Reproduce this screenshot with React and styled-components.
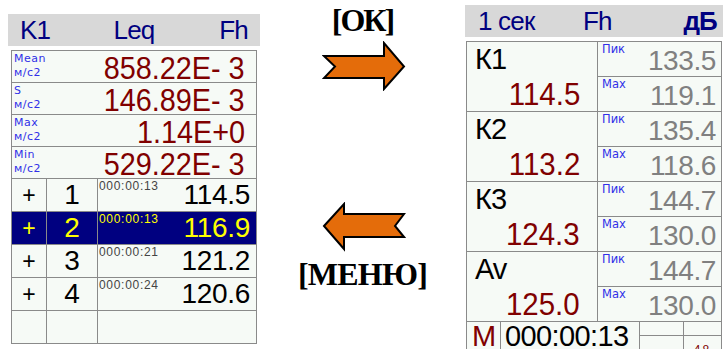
import React from "react";
import styled, { createGlobalStyle } from "styled-components";

const Global = createGlobalStyle`
  html, body {
    margin: 0;
    padding: 0;
    background: #ffffff;
    overflow: hidden;
  }
  body {
    font-family: "Liberation Sans", Arial, sans-serif;
  }
`;

const Page = styled.div`
  display: flex;
  align-items: flex-start;
  width: 726px;
  height: 349px;
  overflow: hidden;
`;

const Screen = styled.div`
  display: flex;
  flex-direction: column;
  width: ${(p) => p.$width}px;
  margin-top: ${(p) => p.$top}px;
  margin-left: ${(p) => p.$left || 0}px;
`;

const Header = styled.div`
  display: grid;
  grid-template-columns: ${(p) => p.$cols};
  align-items: center;
  height: 32px;
  padding: ${(p) => p.$pad};
  background: #d8d8d8;
  color: #000080;
  font-size: 26px;
  letter-spacing: -0.8px;
`;

const HeadText = styled.span`
  justify-self: ${(p) => p.$align || "start"};
  font-weight: ${(p) => (p.$bold ? "bold" : "normal")};
`;

// экранный шрифт прибора уже обычного, поэтому цифры чуть сжаты
const Narrow = styled.span`
  display: inline-block;
  transform: scaleX(${(p) => p.$scale || 1});
  transform-origin: right center;
  white-space: nowrap;
`;

// сетка левого экрана: линии между ячейками даёт фон через gap
const LeqTable = styled.div`
  display: grid;
  grid-template-columns: 34px 50px 1fr;
  grid-template-rows: repeat(4, 31px) repeat(5, 32px);
  gap: 1px;
  padding: 1px;
  margin: 4px 3px 0 3px;
  background: #8a8a8a;
`;

const StatRow = styled.div`
  grid-column: 1 / -1;
  display: flex;
  justify-content: space-between;
  align-items: flex-end;
  background: #f6faf6;
  padding: 0 11px 0 2px;
`;

const UnitLabel = styled.div`
  align-self: flex-start;
  display: flex;
  flex-direction: column;
  padding-top: 1px;
  font-family: "DejaVu Sans", sans-serif;
  font-size: 11px;
  line-height: 14px;
  color: #3030e8;
  letter-spacing: 0.5px;
`;

const StatValue = styled(Narrow)`
  font-size: 32px;
  line-height: 28px;
  color: #800000;
`;

const Cell = styled.div`
  display: flex;
  align-items: center;
  justify-content: center;
  background: ${(p) => (p.$active ? "#000080" : "#f6faf6")};
  color: ${(p) => (p.$active ? "#ffff00" : "#000000")};
  font-size: ${(p) => p.$size || 27}px;
`;

const TimeCell = styled.div`
  display: flex;
  justify-content: flex-end;
  align-items: flex-end;
  position: relative;
  padding: 0 6px 2px 0;
  background: ${(p) => (p.$active ? "#000080" : "#f6faf6")};
  color: ${(p) => (p.$active ? "#ffff00" : "#000000")};
`;

const Stamp = styled.span`
  position: absolute;
  left: 1px;
  top: 1px;
  font-size: 12px;
  line-height: 13px;
  letter-spacing: 0.7px;
  color: ${(p) => (p.$active ? "#ffff00" : "#444444")};
`;

const ListValue = styled.span`
  font-size: 28px;
  line-height: 28px;
  letter-spacing: -0.3px;
`;

const Middle = styled.div`
  display: flex;
  flex-direction: column;
  align-items: center;
  width: 205px;
`;

const Caption = styled.div`
  font-family: "Liberation Serif", "Times New Roman", serif;
  font-weight: bold;
  font-size: 32px;
  line-height: 34px;
  letter-spacing: ${(p) => p.$spacing}px;
  color: #000000;
  margin-top: ${(p) => p.$top}px;
`;

const ArrowSvg = styled.svg`
  display: block;
  margin-top: ${(p) => p.$top}px;
  margin-left: 3px;
`;

const BandTable = styled.div`
  display: grid;
  grid-template-columns: 130px 1fr;
  grid-template-rows: repeat(8, 34px);
  gap: 1px;
  padding: 1px 1px 0 1px;
  margin: 4px 1px 0 1px;
  background: #8a8a8a;
`;

const BandCell = styled.div`
  grid-row: span 2;
  display: flex;
  flex-direction: column;
  justify-content: space-between;
  background: #f6faf6;
  padding: 2px 17px 0 8px;
`;

const BandName = styled.span`
  font-size: 29px;
  line-height: 31px;
  letter-spacing: -1px;
  color: #000000;
`;

const BandLevel = styled(Narrow)`
  align-self: flex-end;
  font-size: 31px;
  line-height: 33px;
  color: #800000;
`;

const SubCell = styled.div`
  display: flex;
  justify-content: space-between;
  align-items: flex-end;
  background: #f6faf6;
  padding: 0 5px 0 4px;
`;

const SubLabel = styled.span`
  align-self: flex-start;
  font-family: "DejaVu Sans", sans-serif;
  font-size: 11.5px;
  line-height: 15px;
  color: #3030e8;
`;

const SubValue = styled.span`
  font-size: 28px;
  line-height: 30px;
  letter-spacing: -0.4px;
  color: #808080;
`;

const StatusBar = styled.div`
  display: grid;
  grid-template-columns: 33px 138px 43px 1fr;
  grid-template-rows: 13px 30px;
  gap: 1px;
  padding: 1px;
  margin: 0 1px;
  background: #8a8a8a;
`;

const StatusCell = styled.div`
  grid-row: ${(p) => (p.$tall ? "span 2" : "auto")};
  display: flex;
  align-items: flex-start;
  justify-content: ${(p) => p.$justify || "flex-start"};
  background: #f6faf6;
  padding: ${(p) => p.$pad || "0"};
  color: ${(p) => p.$color || "#000000"};
  font-size: ${(p) => p.$size || 29}px;
  line-height: 28px;
  letter-spacing: ${(p) => p.$spacing || 0}px;
`;

const stats = [
  { name: "Mean", value: "858.22E- 3" },
  { name: "S", value: "146.89E- 3" },
  { name: "Max", value: "1.14E+0" },
  { name: "Min", value: "529.22E- 3" },
];

const records = [
  { n: 1, time: "000:00:13", value: "114.5" },
  { n: 2, time: "000:00:13", value: "116.9", active: true },
  { n: 3, time: "000:00:21", value: "121.2" },
  { n: 4, time: "000:00:24", value: "120.6" },
];

const bands = [
  { name: "К1", level: "114.5", peak: "133.5", max: "119.1" },
  { name: "К2", level: "113.2", peak: "135.4", max: "118.6" },
  { name: "К3", level: "124.3", peak: "144.7", max: "130.0" },
  { name: "Av", level: "125.0", peak: "144.7", max: "130.0" },
];

const RightArrow = () => (
  <ArrowSvg $top={4} width="84" height="50" viewBox="0 0 84 50">
    <polygon
      points="2,15 13,25.5 2,37 62,37 62,48 82,25.5 62,2 62,15"
      fill="#e46c0a"
      stroke="#000"
      strokeWidth="2"
    />
  </ArrowSvg>
);

const LeftArrow = () => (
  <ArrowSvg $top={111} width="84" height="50" viewBox="0 0 84 50">
    <polygon
      points="2,24 22,2 22,12 82,12 73,24 82,35 22,35 22,47"
      fill="#e46c0a"
      stroke="#000"
      strokeWidth="2"
    />
  </ArrowSvg>
);

const App = () => {
  return (
    <>
      <Global />
      <Page>
        <Screen $width={252} $top={14} $left={8}>
          <Header $cols="1fr auto 1fr" $pad="0 12px 0 12px">
            <HeadText>K1</HeadText>
            <HeadText>Leq</HeadText>
            <HeadText $align="end">Fh</HeadText>
          </Header>
          <LeqTable>
            {stats.map((s) => (
              <StatRow key={s.name}>
                <UnitLabel>
                  <span>{s.name}</span>
                  <span>м/с2</span>
                </UnitLabel>
                <StatValue $scale={0.9}>{s.value}</StatValue>
              </StatRow>
            ))}
            {records.map((r) => (
              <React.Fragment key={r.n}>
                <Cell $active={r.active} $size={23}>
                  +
                </Cell>
                <Cell $active={r.active} $size={28}>
                  {r.n}
                </Cell>
                <TimeCell $active={r.active}>
                  <Stamp $active={r.active}>{r.time}</Stamp>
                  <ListValue>{r.value}</ListValue>
                </TimeCell>
              </React.Fragment>
            ))}
            <Cell />
            <Cell />
            <Cell />
          </LeqTable>
        </Screen>

        <Middle>
          <Caption $top={3} $spacing={-2}>
            [ОК]
          </Caption>
          <RightArrow />
          <LeftArrow />
          <Caption $top={5} $spacing={-0.8}>
            [МЕНЮ]
          </Caption>
        </Middle>

        <Screen $width={258} $top={5}>
          <Header $cols="105px 1fr auto" $pad="0 6px 0 13px">
            <HeadText>1 сек</HeadText>
            <HeadText>Fh</HeadText>
            <HeadText $bold>дБ</HeadText>
          </Header>
          <BandTable>
            {bands.map((b) => (
              <React.Fragment key={b.name}>
                <BandCell>
                  <BandName>{b.name}</BandName>
                  <BandLevel $scale={0.95}>{b.level}</BandLevel>
                </BandCell>
                <SubCell>
                  <SubLabel>Пик</SubLabel>
                  <SubValue>{b.peak}</SubValue>
                </SubCell>
                <SubCell>
                  <SubLabel>Max</SubLabel>
                  <SubValue>{b.max}</SubValue>
                </SubCell>
              </React.Fragment>
            ))}
          </BandTable>
          <StatusBar>
            <StatusCell $tall $color="#800000" $pad="0 0 0 5px">
              M
            </StatusCell>
            <StatusCell $tall $pad="0 0 0 4px" $spacing={-0.6}>
              000:00:13
            </StatusCell>
            <StatusCell />
            <StatusCell />
            <StatusCell />
            <StatusCell $color="#800000" $size={12} $justify="center" $spacing={2}>
              48
            </StatusCell>
          </StatusBar>
        </Screen>
      </Page>
    </>
  );
};

export default App;
